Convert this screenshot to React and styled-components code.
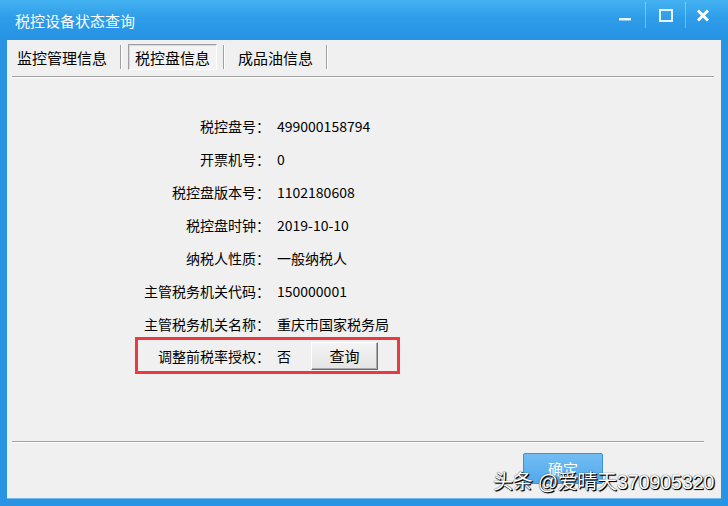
import React from 'react';
import styled, { createGlobalStyle } from 'styled-components';

const GlobalStyle = createGlobalStyle`
  html, body {
    margin: 0;
    padding: 0;
    width: 728px;
    height: 506px;
    overflow: hidden;
  }
  body {
    font-family: "Noto Sans CJK SC", "Noto Sans", sans-serif;
    color: #000;
  }
`;

const Window = styled.div`
  position: relative;
  width: 728px;
  height: 506px;
  background: #2a94e4;
  display: flex;
  flex-direction: column;
  box-sizing: border-box;
`;

const TitleBar = styled.div`
  height: 40px;
  flex-shrink: 0;
  display: flex;
  align-items: flex-start;
  background: linear-gradient(#44b2f1, #2e9de9 45%, #2592e3);
`;

const Title = styled.div`
  margin: 10px 0 0 15px;
  font-size: 15px;
  line-height: 22px;
  color: #fff;
  flex: 1;
`;

const Controls = styled.div`
  display: flex;
  height: 26px;
  margin: 2px 8px 0 0;
`;

const CtrlButton = styled.div`
  width: ${p => p.$w}px;
  height: 26px;
  display: flex;
  align-items: center;
  justify-content: center;
  border-left: ${p => (p.$sep ? '1px solid rgba(255,255,255,0.35)' : 'none')};
`;

const Body = styled.div`
  flex: 1;
  margin: 0 7px 8px 7px;
  background: #f0f0f0;
  display: flex;
  flex-direction: column;
  box-shadow: 0 1px 0 rgba(255, 255, 255, 0.35);
`;

const TabBar = styled.div`
  display: flex;
  align-items: center;
  height: 26px;
  margin: 4px 0 0 3px;
`;

const Tab = styled.div`
  height: 26px;
  box-sizing: border-box;
  padding: 0 6px;
  display: flex;
  align-items: center;
  font-size: 15px;
  border: 1px solid transparent;
  ${p =>
    p.$active &&
    `
    border-color: #a0a0a0 #ffffff #ffffff #a0a0a0;
    box-shadow: inset 1px 1px 0 #d8d8d8;
    background: #f3f3f3;
  `}
`;

const TabSep = styled.div`
  width: 1px;
  height: 24px;
  background: #a0a0a0;
  border-right: 1px solid #fff;
  margin: 0 6px;
`;

const Rule = styled.div`
  height: 1px;
  background: #a0a0a0;
  border-bottom: 1px solid #ffffff;
  margin: ${p => p.$margin};
`;

const Form = styled.div`
  flex: 1;
  display: flex;
  flex-direction: column;
  padding: 31px 0 0 128px;
`;

const Row = styled.div`
  display: flex;
  align-items: center;
  box-sizing: border-box;
  height: ${p => (p.$highlight ? 37 : 33)}px;
  width: 265px;
  border: 3px solid ${p => (p.$highlight ? '#ea3a3f' : 'transparent')};
  margin-top: ${p => (p.$highlight ? -3 : 0)}px;
  font-size: 14px;
`;

const Label = styled.div`
  width: 132px;
  text-align: right;
  white-space: nowrap;
  flex-shrink: 0;
`;

const Value = styled.div`
  margin-left: 7px;
  white-space: nowrap;
`;

const ClassicButton = styled.button`
  margin-left: 20px;
  width: 67px;
  height: 28px;
  font-family: inherit;
  font-size: 15px;
  color: #000;
  background: linear-gradient(#f4f4f4, #e4e4e4);
  border: 1px solid;
  border-color: #ffffff #6e6e6e #6e6e6e #ffffff;
  box-shadow: inset -1px -1px 0 #a8a8a8;
  padding: 0;
`;

const Footer = styled.div`
  height: 55px;
  display: flex;
  justify-content: flex-end;
  padding: 10px 118px 0 0;
  box-sizing: border-box;
`;

const OkButton = styled.button`
  width: 80px;
  height: 31px;
  font-family: inherit;
  font-size: 15px;
  color: #fff;
  background: linear-gradient(#72bdf2, #52a8ec);
  border: 1px solid #3d92da;
  border-radius: 2px;
  padding: 0;
`;

const Watermark = styled.div`
  position: absolute;
  left: 493px;
  top: 466px;
  font-family: "Liberation Sans", "Noto Sans CJK SC", sans-serif;
  font-size: 20px;
  letter-spacing: -0.3px;
  color: #fff;
  white-space: nowrap;
  text-shadow: 1px 1px 1px #000, 0 0 1px #000, 1px 1px 0 #222;
`;

const rows = [
  ['税控盘号：', '499000158794'],
  ['开票机号：', '0'],
  ['税控盘版本号：', '1102180608'],
  ['税控盘时钟：', '2019-10-10'],
  ['纳税人性质：', '一般纳税人'],
  ['主管税务机关代码：', '150000001'],
  ['主管税务机关名称：', '重庆市国家税务局'],
];

export default function App() {
  return (
    <>
      <GlobalStyle />
      <Window>
        <TitleBar>
          <Title>税控设备状态查询</Title>
          <Controls>
            <CtrlButton $w={40}>
              <svg width="12" height="12" viewBox="0 0 12 12">
                <rect x="0" y="9" width="12" height="2.5" fill="#e8f4fd" />
              </svg>
            </CtrlButton>
            <CtrlButton $w={39} $sep>
              <svg width="14" height="13" viewBox="0 0 14 13">
                <rect x="1" y="1" width="12" height="11" fill="none" stroke="#e8f4fd" strokeWidth="2" />
              </svg>
            </CtrlButton>
            <CtrlButton $w={34} $sep>
              <svg width="14" height="13" viewBox="0 0 14 13">
                <path d="M2 1.5 L12 11.5 M12 1.5 L2 11.5" stroke="#ffffff" strokeWidth="3" />
              </svg>
            </CtrlButton>
          </Controls>
        </TitleBar>
        <Body>
          <TabBar>
            <Tab>监控管理信息</Tab>
            <TabSep />
            <Tab $active>税控盘信息</Tab>
            <TabSep />
            <Tab>成品油信息</Tab>
            <TabSep />
          </TabBar>
          <Rule $margin="6px 7px 0 5px" />
          <Form>
            {rows.map(([label, value]) => (
              <Row key={label}>
                <Label>{label}</Label>
                <Value>{value}</Value>
              </Row>
            ))}
            <Row $highlight>
              <Label>调整前税率授权：</Label>
              <Value>否</Value>
              <ClassicButton>查询</ClassicButton>
            </Row>
          </Form>
          <Rule $margin="0 17px 0 5px" />
          <Footer>
            <OkButton>确定</OkButton>
          </Footer>
        </Body>
        <Watermark>头条 @爱晴天370905320</Watermark>
      </Window>
    </>
  );
}
